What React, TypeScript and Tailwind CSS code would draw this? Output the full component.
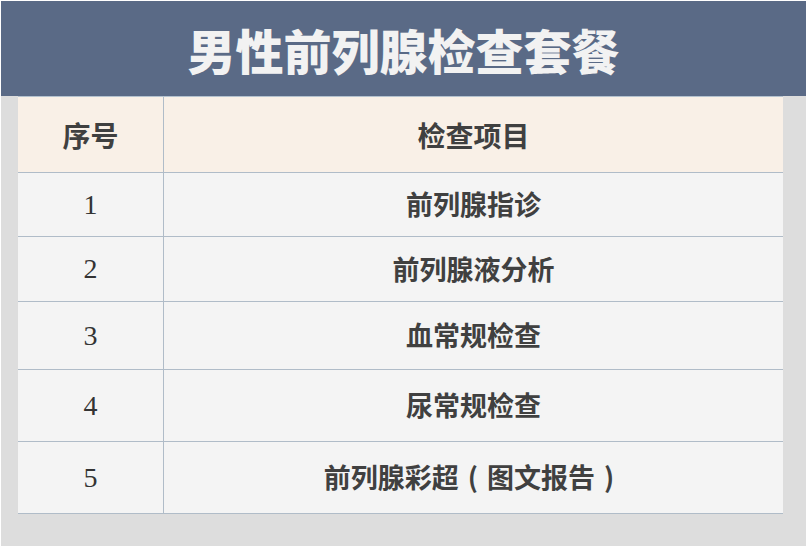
import React from "react";

const rows: { n: string; t: React.ReactNode; h: string }[] = [
  { n: "1", t: "前列腺指诊", h: "h-[64px]" },
  { n: "2", t: "前列腺液分析", h: "h-[65px]" },
  { n: "3", t: "血常规检查", h: "h-[68px]" },
  { n: "4", t: "尿常规检查", h: "h-[72px]" },
  {
    n: "5",
    t: (
      <>
        前列腺彩超
        <span className="inline-block w-[1.05em] text-center">(</span>
        图文报告
        <span className="inline-block w-[1.05em] text-center">)</span>
      </>
    ),
    h: "h-[72px]",
  },
];

const cjk = { fontFamily: '"Noto Sans CJK SC", "Noto Sans", sans-serif' };

export default function App() {
  return (
    <div className="w-[806px] h-[546px] bg-white pl-px pt-px overflow-hidden">
      <div className="w-[805px] h-[545px] bg-[#dddddd] flex flex-col">
        <div
          className="h-[95px] bg-[#5a6a86] flex items-center justify-center text-[#f2f2f2] text-[48px] font-black"
          style={cjk}
        >
          男性前列腺检查套餐
        </div>
        <div className="pl-[17px] pr-[22px]">
          <div className="w-[765px] border-t border-[#b4c2cf]">
            <div className="flex h-[76px] bg-[#f9f0e7] border-b border-[#b0bcc8]">
              <div
                className="w-[146px] border-r border-[#b0bcc8] flex items-center justify-center text-[28px] font-bold text-[#404040]"
                style={cjk}
              >
                序号
              </div>
              <div
                className="flex-1 flex items-center justify-center text-[28px] font-bold text-[#404040]"
                style={cjk}
              >
                检查项目
              </div>
            </div>
            {rows.map((r) => (
              <div key={r.n} className={`flex ${r.h} bg-[#f4f4f4] border-b border-[#b0bcc8]`}>
                <div
                  className="w-[146px] border-r border-[#b0bcc8] flex items-center justify-center text-[28px] text-[#333]"
                  style={{ fontFamily: '"Liberation Serif", "DejaVu Serif", serif' }}
                >
                  {r.n}
                </div>
                <div
                  className="flex-1 flex items-center justify-center text-[27px] font-bold text-[#404040]"
                  style={cjk}
                >
                  {r.t}
                </div>
              </div>
            ))}
          </div>
        </div>
      </div>
    </div>
  );
}
